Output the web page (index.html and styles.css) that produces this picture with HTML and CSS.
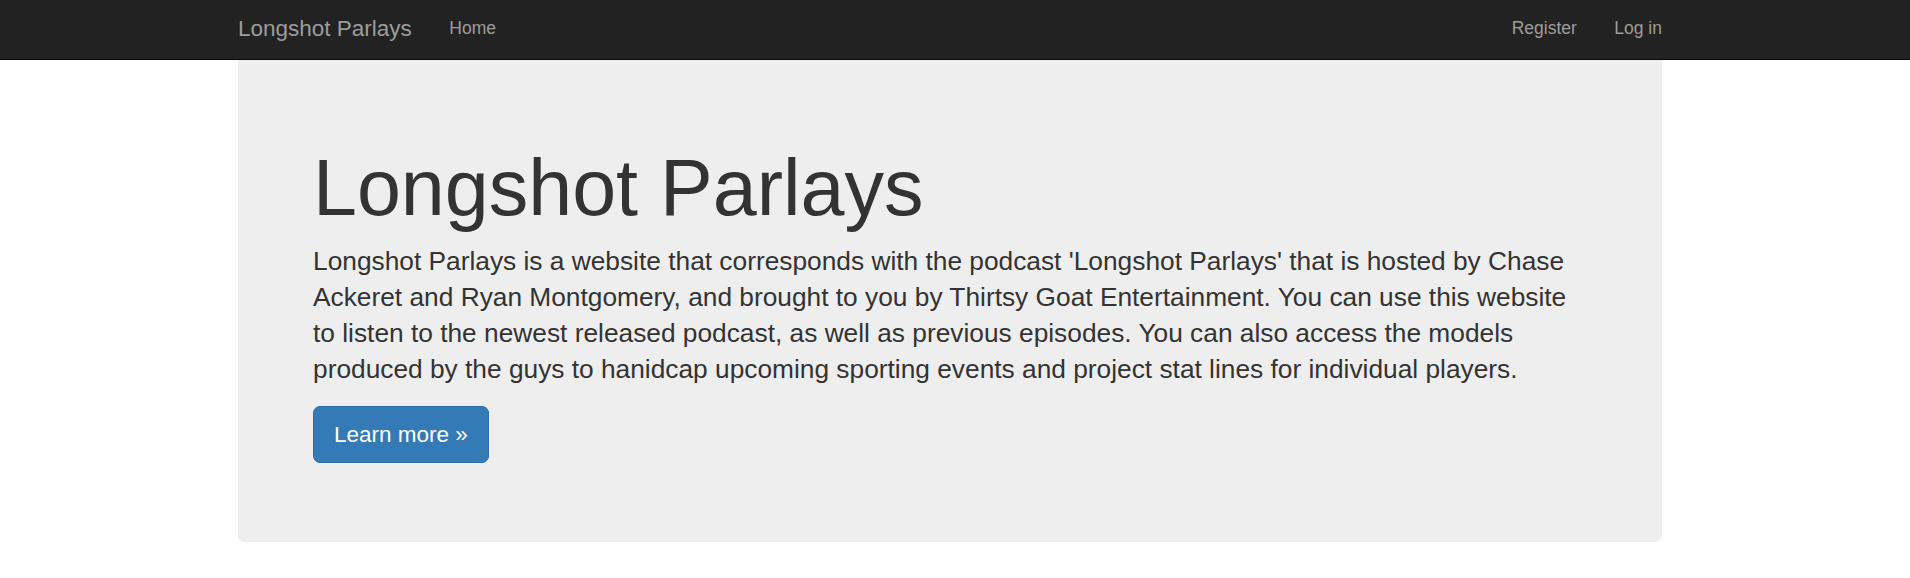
FILE: index.html
```html
<!DOCTYPE html>
<html lang="en">
<head>
<meta charset="utf-8">
<title>Longshot Parlays</title>
<link rel="stylesheet" href="styles.css">
</head>
<body>
<nav class="navbar">
  <div class="container navbar-inner">
    <a class="brand" href="#">Longshot Parlays</a>
    <ul class="nav">
      <li><a href="#">Home</a></li>
    </ul>
    <ul class="nav nav-right">
      <li><a href="#">Register</a></li>
      <li><a href="#">Log in</a></li>
    </ul>
  </div>
</nav>
<main class="container">
  <section class="jumbotron">
    <h1>Longshot Parlays</h1>
    <p class="lead">Longshot Parlays is a website that corresponds with the podcast 'Longshot Parlays' that is hosted by Chase Ackeret and Ryan Montgomery, and brought to you by Thirtsy Goat Entertainment. You can use this website to listen to the newest released podcast, as well as previous episodes. You can also access the models produced by the guys to hanidcap upcoming sporting events and project stat lines for individual players.</p>
    <p class="actions"><a class="btn" href="#">Learn more &raquo;</a></p>
  </section>
</main>
</body>
</html>
```

FILE: styles.css
```css
* { box-sizing: border-box; }
html, body { margin: 0; padding: 0; }
body {
  font-family: "Liberation Sans", Arial, Helvetica, sans-serif;
  color: #333;
  background: #fff;
}
a { text-decoration: none; }

.container {
  width: 1424px;
  margin-left: 238px;
}

.navbar {
  background: #222;
  border-bottom: 1px solid #080808;
  height: 60px;
}
.navbar-inner {
  display: flex;
  align-items: flex-start;
  height: 59px;
}
.brand {
  color: #9d9d9d;
  font-size: 22.5px;
  line-height: 25px;
  padding: 16px 18.75px 0 0;
}
.nav {
  list-style: none;
  margin: 0;
  padding: 0;
  display: flex;
}
.nav a {
  display: block;
  color: #9d9d9d;
  font-size: 17.5px;
  line-height: 25px;
  padding: 15.5px 18.75px 0;
}
.nav-right {
  margin-left: auto;
  margin-right: -18.75px;
}

.jumbotron {
  background: #eee;
  border-radius: 0 0 7px 7px;
  padding: 60px 75px;
}
.jumbotron h1 {
  margin: 24px 0 12px;
  font-size: 79px;
  line-height: 87px;
  font-weight: 400;
  color: #333;
}
.lead {
  margin: 0 0 19px;
  font-size: 26.3px;
  line-height: 36px;
  font-weight: 400;
}
.actions {
  margin: 0 0 19px;
  line-height: 0;
}
.btn {
  display: inline-block;
  background: #337ab7;
  border: 1px solid #2e6da4;
  border-radius: 7px;
  color: #fff;
  font-size: 22.5px;
  line-height: 30px;
  padding: 12.5px 20px;
}
```
